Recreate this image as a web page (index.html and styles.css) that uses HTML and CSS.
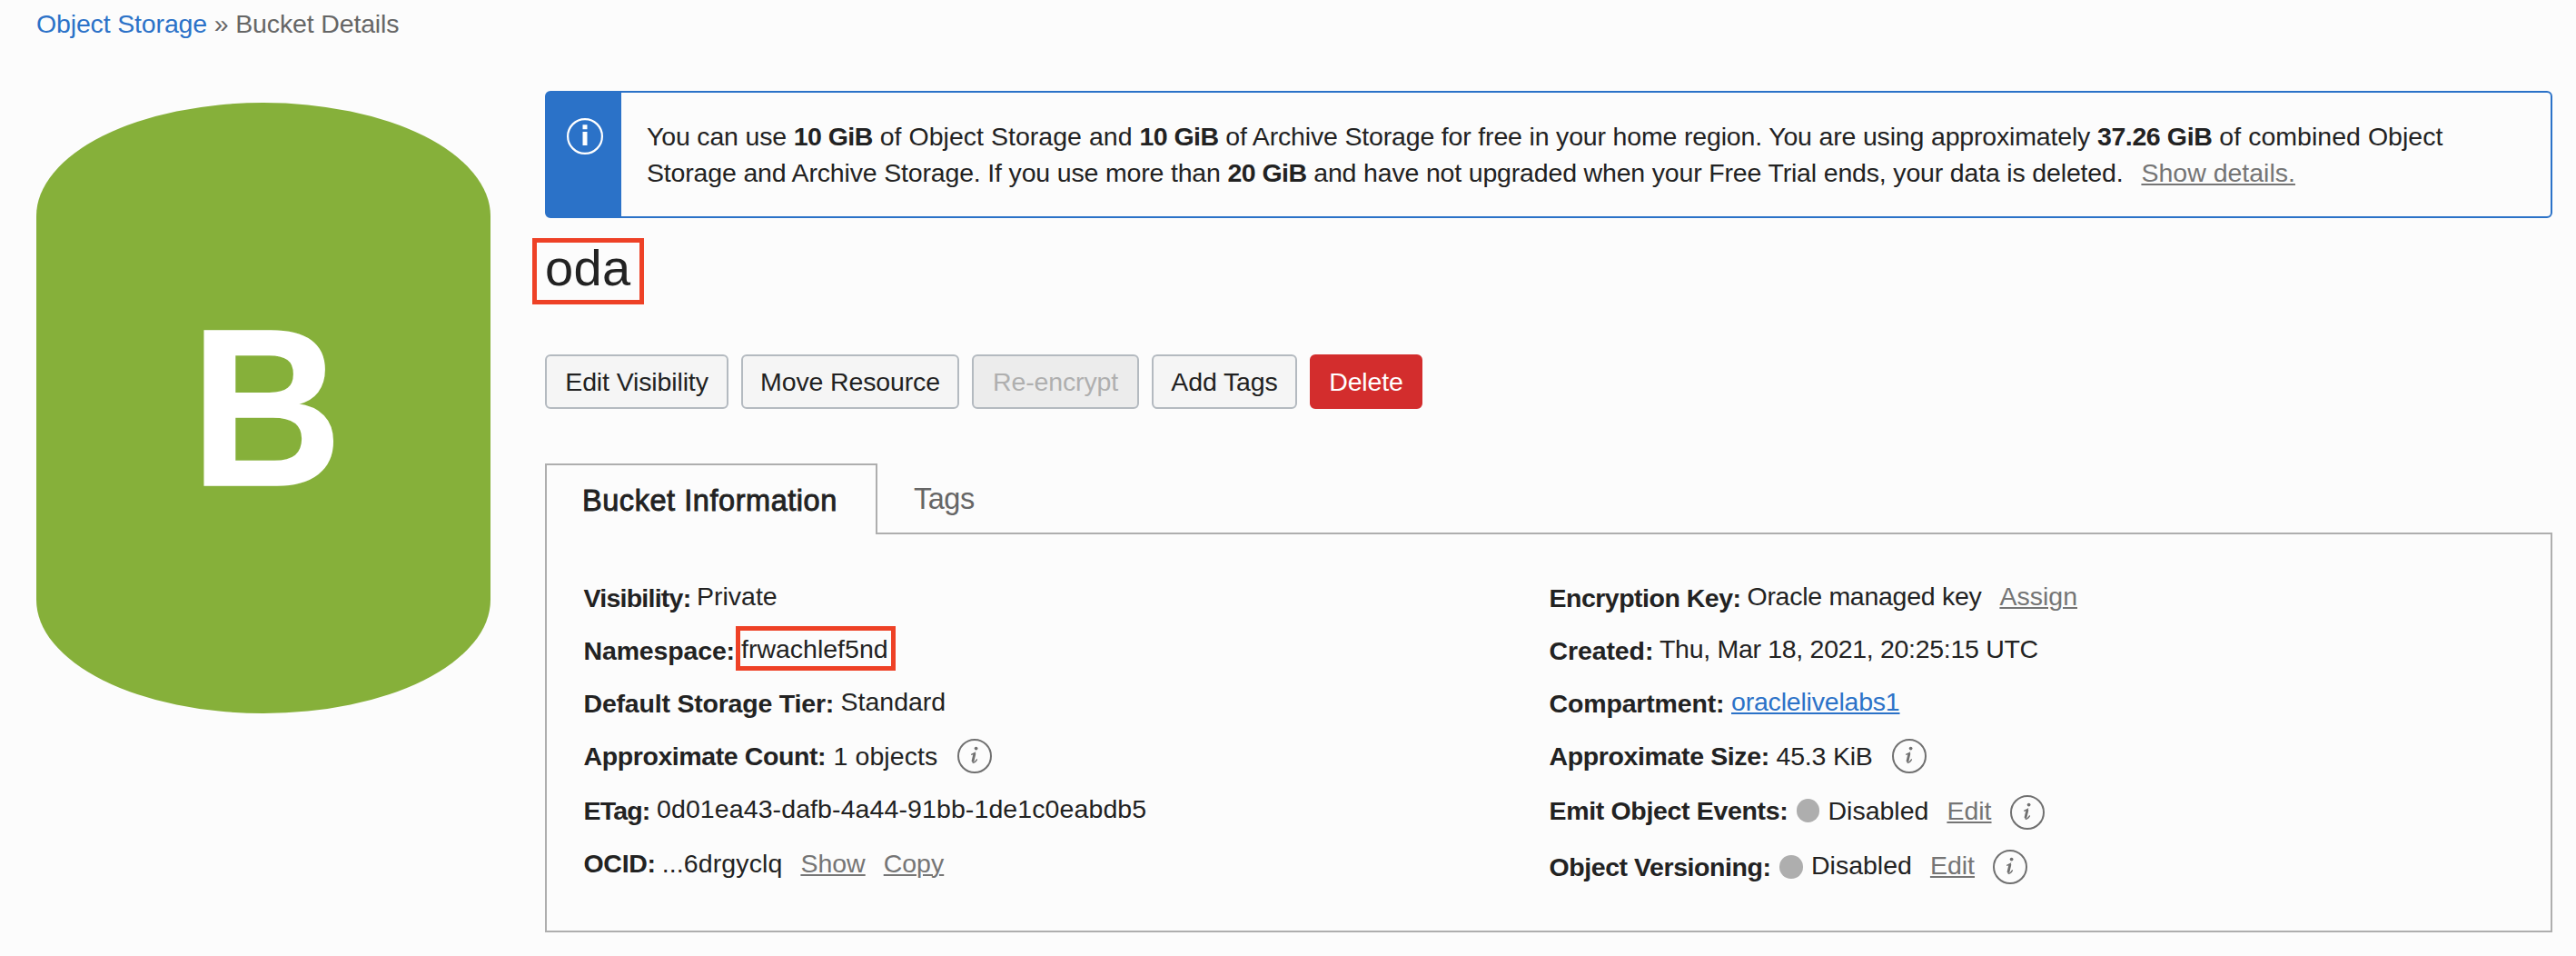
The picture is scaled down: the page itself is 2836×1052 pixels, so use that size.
FILE: index.html
```html
<!DOCTYPE html>
<html lang="en">
<head>
<meta charset="utf-8">
<title>Bucket Details</title>
<link rel="stylesheet" href="styles.css">
</head>
<body>
<svg class="defs" aria-hidden="true">
  <symbol id="info" viewBox="0 0 38 38">
    <circle cx="19" cy="19" r="18" fill="none" stroke="#707070" stroke-width="2"/>
    <circle cx="20.6" cy="10.6" r="1.9" fill="#707070"/>
    <path d="M15.8 17.2 Q17.6 16.6 19.2 15.6 L17.1 23.6 Q16.3 27 18.6 25.9 Q20.3 25 21.4 22.9" fill="none" stroke="#707070" stroke-width="1.4" stroke-linecap="round"/>
    <path d="M19 16 L16.9 25" stroke="#707070" stroke-width="2.8" fill="none"/>
  </symbol>
</svg>
<nav class="breadcrumb"><a href="#">Object Storage</a> » <span>Bucket Details</span></nav>
<main class="page">
  <div class="bucket-icon"><span>B</span></div>
  <section class="content">
    <div class="alert">
      <div class="alert-icon">
        <svg width="40" height="40" viewBox="0 0 40 40"><circle cx="20" cy="20" r="18.9" fill="none" stroke="#fff" stroke-width="2.2"/><path d="M17.5 7.3h5v5h-5zM17.5 15h5v15h-5z" fill="#fff"/></svg>
      </div>
      <p>You can use <b>10 GiB</b><span class="loose"> of Object Storage and </span><b>10 GiB</b> of Archive Storage for free in your home region. You are using approximately <b class="total">37.26 GiB</b><span class="loose"> of combined Object</span><br>Storage and Archive Storage. If you use more than <b>20 GiB</b> and have not upgraded when your Free Trial ends, your data is deleted.<a class="link details" href="#">Show details.</a></p>
    </div>
    <h1><span class="marked title-mark">oda</span></h1>
    <div class="actions">
      <button class="edit">Edit Visibility</button>
      <button class="move">Move Resource</button>
      <button class="reencrypt" disabled>Re-encrypt</button>
      <button class="add">Add Tags</button>
      <button class="delete">Delete</button>
    </div>
    <div class="tabs">
      <div class="tab active">Bucket Information</div>
      <div class="tab">Tags</div>
    </div>
    <div class="panel">
      <div class="col">
        <div class="row visibility"><b>Visibility:</b><span class="up">Private</span></div>
        <div class="row namespace"><b>Namespace:</b><span class="up marked ns-mark">frwachlef5nd</span></div>
        <div class="row tier"><b>Default Storage Tier:</b><span class="up">Standard</span></div>
        <div class="row tall count"><b>Approximate Count:</b><span>1 objects</span><svg class="info"><use href="#info"/></svg></div>
        <div class="row etag"><b>ETag:</b><span class="up">0d01ea43-dafb-4a44-91bb-1de1c0eabdb5</span></div>
        <div class="row ocid"><b>OCID:</b><span>...6drgyclq</span><a class="link" href="#">Show</a><a class="link" href="#">Copy</a></div>
      </div>
      <div class="col">
        <div class="row key"><b>Encryption Key:</b><span class="up">Oracle managed key</span><a class="link up" href="#">Assign</a></div>
        <div class="row created"><b>Created:</b><span class="up">Thu, Mar 18, 2021, 20:25:15 UTC</span></div>
        <div class="row compartment"><b>Compartment:</b><a class="link blue up" href="#">oraclelivelabs1</a></div>
        <div class="row tall size"><b>Approximate Size:</b><span>45.3 KiB</span><svg class="info"><use href="#info"/></svg></div>
        <div class="row taller events"><b>Emit Object Events:</b><i class="dot"></i><span class="state">Disabled</span><a class="link" href="#">Edit</a><svg class="info"><use href="#info"/></svg></div>
        <div class="row versioning"><b>Object Versioning:</b><i class="dot"></i><span class="state up">Disabled</span><a class="link up" href="#">Edit</a><svg class="info"><use href="#info"/></svg></div>
      </div>
    </div>
  </section>
</main>
</body>
</html>
```
FILE: styles.css
```css
* { box-sizing: border-box; }
body {
  margin: 0;
  padding: 6px 26px 0 40px;
  height: 1052px;
  overflow: hidden;
  background: #fcfcfc;
  color: #222;
  font: 28.5px/40px "Liberation Sans", Arial, sans-serif;
}
.defs { display: none; }
a { color: #2b72c8; text-decoration: none; }

.breadcrumb { height: 40px; color: #666; letter-spacing: -.15px; }

.page { display: flex; gap: 60px; padding-top: 54px; }
.bucket-icon {
  flex: none;
  width: 500px;
  height: 672px;
  margin-top: 13px;
  border-radius: 250px / 125px;
  background: #86b03a;
  color: #fff;
  font-size: 246px;
  font-weight: bold;
  line-height: 672px;
  text-align: center;
}
.bucket-icon span { display: inline-block; transform: translate(3.5px, 0) scaleX(.94); -webkit-text-stroke: 1.5px #fff; }

.content { width: 2210px; }

.alert {
  display: flex;
  height: 140px;
  border: 2px solid #2b72c8;
  border-radius: 6px;
}
.alert-icon {
  flex: none;
  width: 82px;
  padding: 28px 0 0 22px;
  background: #2b72c8;
}
.alert-icon svg { display: block; }
.alert p { margin: 0; padding: 28px 0 0 28px; white-space: nowrap; letter-spacing: -.17px; }
.alert b { letter-spacing: -.55px; }
.alert .total { letter-spacing: -.38px; }
.alert .loose { letter-spacing: .03px; }

.link {
  color: #757575;
  text-decoration: underline;
  text-decoration-thickness: 2px;
  text-underline-offset: 2px;
}
.alert .details { margin-left: 20px; letter-spacing: 0; }
.blue { color: #2b72c8; }

h1 {
  margin: 23px 0 63px;
  font-size: 56px;
  font-weight: normal;
  line-height: 64px;
  letter-spacing: .3px;
}
.marked { position: relative; display: inline-block; }
.marked::after { content: ""; position: absolute; border: 5px solid #ee4126; }
.title-mark { display: block; width: 94px; }
.title-mark::after { inset: -1px -15px -8px -14px; }
.ns-mark::after { inset: -5px -8px -4px -6.5px; }

.actions { display: flex; gap: 14px; }
button {
  height: 60px;
  padding: 0;
  border: 2px solid #b4bac0;
  border-radius: 6px;
  background: #f5f5f5;
  color: #222;
  font: inherit;
  letter-spacing: -.13px;
}
.edit { width: 202px; }
.move { width: 240px; }
.reencrypt { width: 184px; background: #ececec; color: #afafaf; }
.add { width: 160px; }
.delete { width: 124px; border-color: #d32d2d; background: #d32d2d; color: #fff; }

.tabs { display: flex; height: 78px; margin-top: 60px; font-size: 32.5px; }
.tab {
  flex: 1;
  padding: 19px 0 0 40px;
  border-bottom: 2px solid #aeaeae;
  color: #666;
  letter-spacing: -.5px;
}
.tab.active {
  flex: none;
  width: 366px;
  padding-left: 39px;
  border: 2px solid #aeaeae;
  border-bottom: 0;
  color: #222;
  letter-spacing: .55px;
  -webkit-text-stroke: .9px #222;
}

.panel {
  display: grid;
  grid-template-columns: 1063px 1fr;
  height: 438px;
  padding: 50px 0 0 40.5px;
  border: 2px solid #aeaeae;
  border-top: 0;
}
.row { display: flex; align-items: flex-start; gap: 20px; height: 58px; white-space: nowrap; }
.row > b { flex: none; margin-right: -20px; letter-spacing: -.2px; }
.row.tall { height: 60px; }
.row.taller { height: 62px; }
.row .up { margin-top: -2px; }
.visibility > b { width: 124.5px; letter-spacing: -.75px; }
.namespace > b { width: 173.5px; letter-spacing: -.15px; }
.tier > b { width: 283px; letter-spacing: -.2px; }
.count > b { width: 275px; letter-spacing: -.4px; }
.count > span { letter-spacing: .1px; }
.etag > b { width: 80.5px; letter-spacing: -.8px; }
.etag > span, .ocid > span { letter-spacing: .1px; }
.ocid > b { width: 86.3px; letter-spacing: -.3px; }
.key > b { width: 218px; letter-spacing: -.5px; }
.key > span { letter-spacing: -.28px; }
.created > b { width: 121.5px; letter-spacing: -.1px; }
.created > span { letter-spacing: -.3px; }
.compartment > b { width: 200.5px; letter-spacing: -.15px; }
.compartment > a { letter-spacing: -.2px; }
.size > b { width: 250px; letter-spacing: -.37px; }
.size > span { letter-spacing: -.2px; }
.count .info, .size .info { margin-left: 1.5px; }
.events > b { width: 272px; letter-spacing: -.33px; }
.versioning > b { width: 253.5px; letter-spacing: -.43px; }

.info { flex: none; width: 38px; height: 38px; margin-top: 1px; }
.events .info { margin-top: 3px; }
.dot {
  flex: none;
  width: 25.5px;
  height: 25.5px;
  margin: 7px -10.5px 0 0;
  border-radius: 50%;
  background: #aeaeae;
}
```
